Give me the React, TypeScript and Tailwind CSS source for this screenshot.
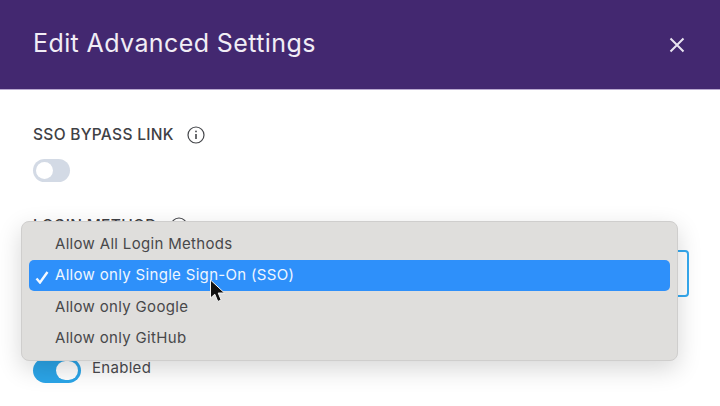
export default function App() {
  return (
    <div className="relative w-[720px] h-[406px] overflow-hidden bg-white font-['Inter',sans-serif]">
      <header className="h-[90px] bg-[#432870] border-b border-b-[#b9a9cf] flex items-center justify-between pl-[33px] pr-[35px]">
        <h1 className="text-[25px] leading-none font-normal text-[#f1edf5] tracking-[0.4px] -mt-[2px]">Edit Advanced Settings</h1>
        <svg width="16" height="16" viewBox="0 0 16 16" className="text-[#e9e4f0]" fill="none" stroke="currentColor" strokeWidth="2">
          <path d="M1.5 1.5 14.5 14.5M14.5 1.5 1.5 14.5" />
        </svg>
      </header>
      <main className="px-[33px] pt-[35px] w-[656px] box-content">
        <div className="flex items-center gap-[13px] h-[20px]">
          <span className="text-[15.5px] font-medium text-[#3f4145] tracking-[0.3px]">SSO BYPASS LINK</span>
          <svg width="18" height="18" viewBox="0 0 18 18" fill="none" stroke="#44464a" strokeWidth="1.2">
            <circle cx="9" cy="9" r="8" />
            <path d="M9 8v5" strokeWidth="1.6" />
            <circle cx="9" cy="5.4" r="0.9" fill="#44464a" stroke="none" />
          </svg>
        </div>
        <div className="mt-[14px] w-[37px] h-[23px] rounded-full bg-[#d3dae5] p-[3px]">
          <div className="w-[17px] h-[17px] rounded-full bg-white" />
        </div>
        <div className="mt-[34px] flex items-center gap-[13px] h-[20px]">
          <span className="text-[15.5px] font-medium text-[#3f4145] tracking-[0.3px]">LOGIN METHOD</span>
          <svg width="18" height="18" viewBox="0 0 18 18" fill="none" stroke="#44464a" strokeWidth="1.2">
            <circle cx="9" cy="9" r="8" />
          </svg>
        </div>
        <div className="mt-[14px] h-[47px] rounded-[4px] border-2 border-[#35aaf0] bg-white" />
        <div className="mt-[61px] flex items-center gap-[11px]">
          <div className="w-[48px] h-[25px] rounded-full bg-[#2ba5e8] p-[3px] flex justify-end">
            <div className="w-[22px] h-[19px] rounded-full bg-white" />
          </div>
          <span className="text-[15px] text-[#4a4b4f] -mt-[4px] tracking-[0.3px]">Enabled</span>
        </div>
      </main>
      <div className="absolute left-[21px] top-[221px] w-[657px] h-[140px] rounded-[8px] border border-[#cfcecd] bg-[#dfdedc] shadow-[0_8px_24px_rgba(0,0,0,0.16)] px-[7px] pt-[7px] text-[15px] tracking-[0.32px] text-[#48484a]">
        <div className="h-[31px] flex items-center pl-[26px]">Allow All Login Methods</div>
        <div className="h-[31px] relative flex items-center pl-[26px] rounded-[5px] bg-[#2e90fa] text-[#eef6ff]">
          <svg width="14" height="13" viewBox="0 0 14 13" fill="none" stroke="#f4f9ff" strokeWidth="2.4" className="absolute left-[6px] top-[11px]">
            <path d="M1.5 7.5 5 11.5 12.5 1" />
          </svg>
          Allow only Single Sign-On (SSO)
        </div>
        <div className="h-[31px] mt-[1px] flex items-center pl-[26px]">Allow only Google</div>
        <div className="h-[31px] flex items-center pl-[26px]">Allow only GitHub</div>
      </div>
      <svg width="17" height="24" viewBox="0 0 17 24" className="absolute left-[209px] top-[279px]">
        <path d="M1.5 1 1.5 19 5.8 15.2 8.8 22.5 12.2 21 9.2 14 15.5 14Z" fill="#111" stroke="#f5f5f5" strokeWidth="1" />
      </svg>
    </div>
  );
}
